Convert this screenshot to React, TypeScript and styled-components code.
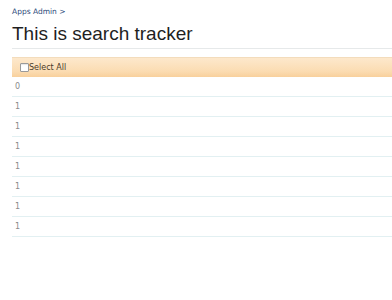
import React from 'react';
import styled, { createGlobalStyle } from 'styled-components';

const GlobalStyle = createGlobalStyle`
  html, body {
    margin: 0;
    padding: 0;
    background: #ffffff;
    font-family: "DejaVu Sans", "Liberation Sans", sans-serif;
  }
`;

const Page = styled.div`
  width: 392px;
  height: 300px;
  overflow: hidden;
  padding: 7px 0 0 12px;
  box-sizing: border-box;
`;

const Breadcrumb = styled.a`
  display: block;
  font-size: 7.5px;
  line-height: 10px;
  color: #2d4a7a;
  text-decoration: none;
`;

const Title = styled.h1`
  margin: 4px 0 0 0;
  font-family: "Liberation Sans", Arial, sans-serif;
  font-size: 19px;
  font-weight: normal;
  line-height: 26px;
  color: #1f1f1f;
  padding-bottom: 1px;
  border-bottom: 1px solid #e6e9ea;
`;

const Table = styled.div`
  margin-top: 8px;
  display: flex;
  flex-direction: column;
`;

const HeaderBar = styled.div`
  height: 20px;
  display: flex;
  align-items: center;
  padding-left: 8px;
  box-sizing: border-box;
  border-top: 1px solid #f3dcbc;
  background: linear-gradient(#fde8cc, #fbdcb2 70%, #f8d09c);
  font-size: 8px;
  color: #4a3a2a;
`;

const Checkbox = styled.span`
  width: 7px;
  height: 7px;
  border: 1px solid #9a9a9a;
  border-radius: 1px;
  background: #ffffff;
  box-shadow: inset 0 1px 1px rgba(0, 0, 0, 0.1);
`;

const Row = styled.div`
  height: 20px;
  display: flex;
  align-items: center;
  padding-left: 3px;
  box-sizing: border-box;
  border-bottom: 1px solid #e2f0f2;
  font-size: 8px;
  color: #8a8a8a;
`;

const rows = [0, 1, 1, 1, 1, 1, 1, 1];

export default function App() {
  return (
    <>
      <GlobalStyle />
      <Page>
        <Breadcrumb href="#">Apps Admin &gt;</Breadcrumb>
        <Title>This is search tracker</Title>
        <Table>
          <HeaderBar>
            <Checkbox />
            Select All
          </HeaderBar>
          {rows.map((v, i) => (
            <Row key={i}>{v}</Row>
          ))}
        </Table>
      </Page>
    </>
  );
}
